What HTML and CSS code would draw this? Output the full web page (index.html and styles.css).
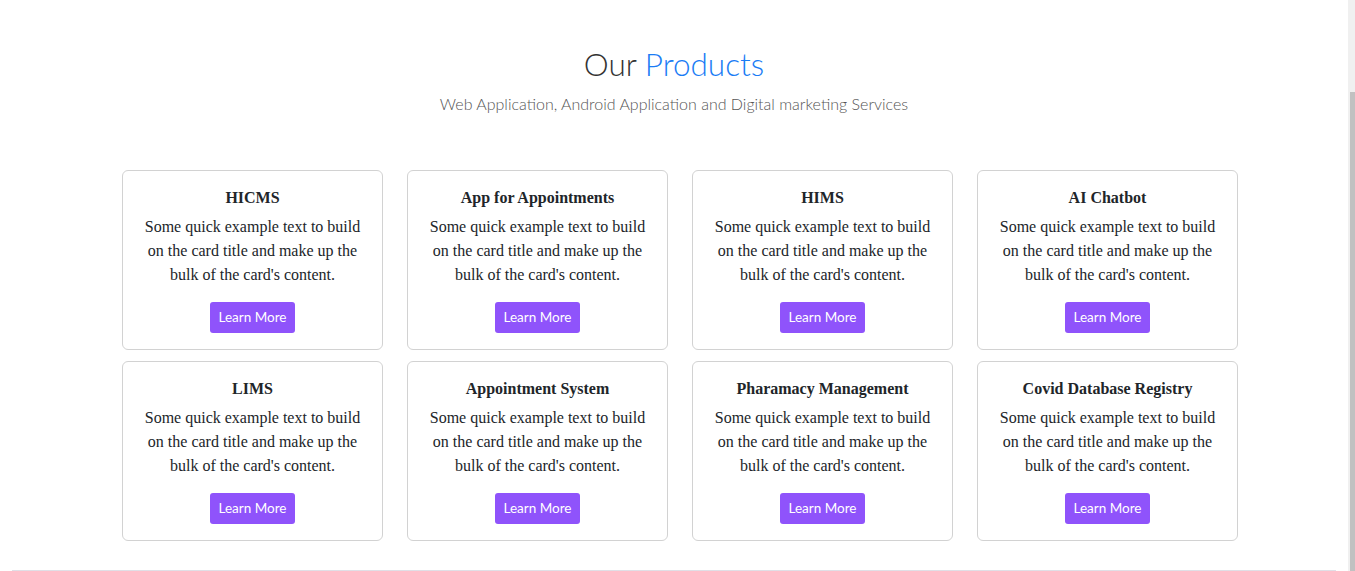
FILE: index.html
```html
<!DOCTYPE html>
<html lang="en">
<head>
<meta charset="utf-8">
<title>Our Products</title>
<link rel="stylesheet" href="styles.css">
</head>
<body>
<section class="products">
  <header class="products-head">
    <h2 class="products-title">Our <span class="accent">Products</span></h2>
    <p class="products-sub">Web Application, Android Application and Digital marketing Services</p>
  </header>
  <div class="products-wrap">
    <div class="grid">
      <div class="card"><h5 class="card-title">HICMS</h5><p class="card-text">Some quick example text to build on the card title and make up the bulk of the card's content.</p><a class="btn" href="#">Learn More</a></div>
      <div class="card"><h5 class="card-title">App for Appointments</h5><p class="card-text">Some quick example text to build on the card title and make up the bulk of the card's content.</p><a class="btn" href="#">Learn More</a></div>
      <div class="card"><h5 class="card-title">HIMS</h5><p class="card-text">Some quick example text to build on the card title and make up the bulk of the card's content.</p><a class="btn" href="#">Learn More</a></div>
      <div class="card"><h5 class="card-title">AI Chatbot</h5><p class="card-text">Some quick example text to build on the card title and make up the bulk of the card's content.</p><a class="btn" href="#">Learn More</a></div>
      <div class="card"><h5 class="card-title">LIMS</h5><p class="card-text">Some quick example text to build on the card title and make up the bulk of the card's content.</p><a class="btn" href="#">Learn More</a></div>
      <div class="card"><h5 class="card-title">Appointment System</h5><p class="card-text">Some quick example text to build on the card title and make up the bulk of the card's content.</p><a class="btn" href="#">Learn More</a></div>
      <div class="card"><h5 class="card-title">Pharamacy Management</h5><p class="card-text">Some quick example text to build on the card title and make up the bulk of the card's content.</p><a class="btn" href="#">Learn More</a></div>
      <div class="card"><h5 class="card-title">Covid Database Registry</h5><p class="card-text">Some quick example text to build on the card title and make up the bulk of the card's content.</p><a class="btn" href="#">Learn More</a></div>
    </div>
  </div>
  <hr class="divider">
</section>
<div class="scroll-thumb"></div>
</body>
</html>
```

FILE: styles.css
```css
html {
  background: #f0f0f0;
}
body {
  margin: 0 7px 0 0;
  min-height: 571px;
  background: #fff;
  font-family: "Liberation Serif", "Times New Roman", serif;
  color: #212529;
}
.scroll-thumb {
  position: fixed;
  right: 0;
  top: 92px;
  width: 5px;
  height: 479px;
  background: #c1c1c1;
}
.products {
  padding-top: 45px;
}
.products-head {
  text-align: center;
}
.products-title {
  margin: 0;
  font-family: Lato, "Open Sans", sans-serif;
  font-weight: 300;
  font-size: 31.5px;
  line-height: 38px;
  color: #333;
}
.accent {
  color: #1a7cf5;
}
.products-sub {
  margin: 11px 0 0;
  font-family: Lato, "Open Sans", sans-serif;
  font-weight: 300;
  font-size: 16px;
  line-height: 20px;
  color: #555;
}
.products-wrap {
  width: 1140px;
  margin: 56px auto 0;
  padding-left: 18px;
  box-sizing: border-box;
}
.grid {
  display: grid;
  grid-template-columns: repeat(4, 261px);
  column-gap: 24px;
  row-gap: 11px;
}
.card {
  border: 1px solid #d2d2d2;
  border-radius: 6px;
  padding: 17px 16px 16px;
  text-align: center;
  display: flex;
  flex-direction: column;
  align-items: center;
}
.card-title {
  margin: 0;
  font-size: 16px;
  line-height: 19px;
  font-weight: 700;
  color: #212529;
}
.card-text {
  margin: 8px 0 15px;
  font-size: 16px;
  line-height: 24px;
  color: #212529;
}
.btn {
  display: inline-block;
  height: 31px;
  line-height: 31px;
  padding: 0 9px;
  box-sizing: border-box;
  background: #8f53fb;
  color: #fff;
  border-radius: 3px;
  text-decoration: none;
  font-family: Lato, "Open Sans", sans-serif;
  font-size: 13.5px;
}
.divider {
  margin: 29px 12px 0;
  border: 0;
  border-top: 1px solid #e0dfe6;
}
```
